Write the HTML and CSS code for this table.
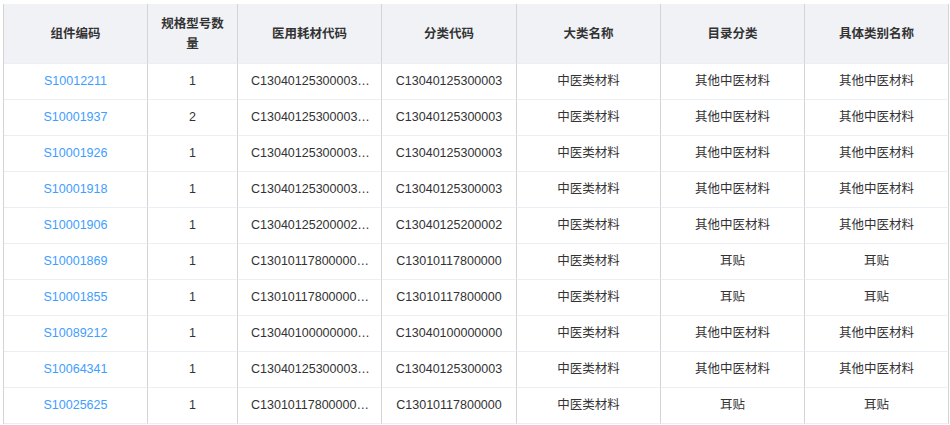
FILE: index.html
```html
<!DOCTYPE html>
<html lang="zh-CN">
<head>
<meta charset="utf-8">
<title>组件列表</title>
<link rel="stylesheet" href="styles.css">
</head>
<body>
<div class="wrap">
<table class="grid">
  <colgroup>
    <col class="c1"><col class="c2"><col class="c3"><col class="c4"><col class="c5"><col class="c6"><col class="c7">
  </colgroup>
  <thead>
    <tr>
      <th>组件编码</th>
      <th>规格型号数量</th>
      <th>医用耗材代码</th>
      <th>分类代码</th>
      <th>大类名称</th>
      <th>目录分类</th>
      <th>具体类别名称</th>
    </tr>
  </thead>
  <tbody>
    <tr><td><a class="link">S10012211</a></td><td>1</td><td class="ell">C1304012530000300001</td><td>C13040125300003</td><td>中医类材料</td><td>其他中医材料</td><td>其他中医材料</td></tr>
    <tr><td><a class="link">S10001937</a></td><td>2</td><td class="ell">C1304012530000300001</td><td>C13040125300003</td><td>中医类材料</td><td>其他中医材料</td><td>其他中医材料</td></tr>
    <tr><td><a class="link">S10001926</a></td><td>1</td><td class="ell">C1304012530000300001</td><td>C13040125300003</td><td>中医类材料</td><td>其他中医材料</td><td>其他中医材料</td></tr>
    <tr><td><a class="link">S10001918</a></td><td>1</td><td class="ell">C1304012530000300001</td><td>C13040125300003</td><td>中医类材料</td><td>其他中医材料</td><td>其他中医材料</td></tr>
    <tr><td><a class="link">S10001906</a></td><td>1</td><td class="ell">C1304012520000200001</td><td>C13040125200002</td><td>中医类材料</td><td>其他中医材料</td><td>其他中医材料</td></tr>
    <tr><td><a class="link">S10001869</a></td><td>1</td><td class="ell">C1301011780000000001</td><td>C13010117800000</td><td>中医类材料</td><td>耳贴</td><td>耳贴</td></tr>
    <tr><td><a class="link">S10001855</a></td><td>1</td><td class="ell">C1301011780000000001</td><td>C13010117800000</td><td>中医类材料</td><td>耳贴</td><td>耳贴</td></tr>
    <tr><td><a class="link">S10089212</a></td><td>1</td><td class="ell">C1304010000000000001</td><td>C13040100000000</td><td>中医类材料</td><td>其他中医材料</td><td>其他中医材料</td></tr>
    <tr><td><a class="link">S10064341</a></td><td>1</td><td class="ell">C1304012530000300001</td><td>C13040125300003</td><td>中医类材料</td><td>其他中医材料</td><td>其他中医材料</td></tr>
    <tr><td><a class="link">S10025625</a></td><td>1</td><td class="ell">C1301011780000000001</td><td>C13010117800000</td><td>中医类材料</td><td>耳贴</td><td>耳贴</td></tr>
  </tbody>
</table>
</div>
</body>
</html>
```

FILE: styles.css
```css
html, body {
  margin: 0;
  padding: 0;
  background: #ffffff;
}

.wrap {
  padding: 4px 0 0 3px;
}

.grid {
  width: 946px;
  table-layout: fixed;
  border-collapse: separate;
  border-spacing: 0;
  border-left: 1px solid #d4d4d4;
  font-family: "Liberation Sans", "Noto Sans CJK SC", sans-serif;
  font-size: 12.5px;
  color: #333333;
}

.c1 { width: 144px; }
.c2 { width: 90px; }
.c3 { width: 144px; }
.c4 { width: 135px; }
.c5 { width: 144px; }
.c6 { width: 144px; }
.c7 { width: 144px; }

.grid th,
.grid td {
  padding: 0 12px;
  text-align: center;
  vertical-align: middle;
  border-right: 1px solid #d4d4d4;
  border-bottom: 1px solid #ebeef5;
}

.grid thead tr {
  height: 60px;
}

.grid th {
  background: #f0f2f6;
  font-weight: 700;
  color: #333333;
  line-height: 20px;
  padding: 0 12px;
}

.grid tbody tr {
  height: 36px;
}

.grid td {
  line-height: 20px;
  padding-bottom: 2px;
  white-space: nowrap;
  overflow: hidden;
  text-overflow: ellipsis;
}

.grid td.ell {
  text-align: left;
  padding-left: 13px;
  padding-right: 11px;
}

.link {
  color: #409eff;
  text-decoration: none;
  cursor: pointer;
}
```
